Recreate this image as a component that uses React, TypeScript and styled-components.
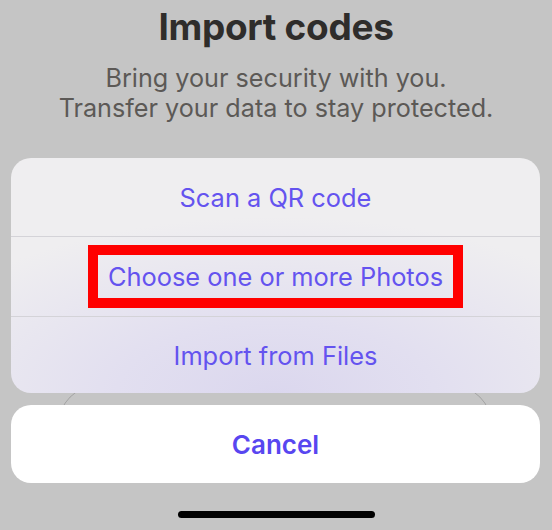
import React from 'react';
import styled, { createGlobalStyle } from 'styled-components';

const GlobalStyle = createGlobalStyle`
    html, body {
        margin: 0;
        padding: 0;
        background: #c5c5c5;
    }
    * {
        box-sizing: border-box;
    }
`;

const Screen = styled.div`
    position: relative;
    width: 552px;
    height: 530px;
    overflow: hidden;
    display: flex;
    flex-direction: column;
    background: #c5c5c5;
    font-family: Inter, 'Noto Sans', sans-serif;
`;

const Header = styled.div`
    display: flex;
    flex-direction: column;
    align-items: center;
    padding-top: 4px;
    height: 158px;
`;

const Title = styled.h1`
    margin: 0;
    font-size: 37px;
    line-height: 46px;
    font-weight: 700;
    color: #2f2d2b;
    letter-spacing: -0.3px;
`;

const Subtitle = styled.p`
    margin: 13px 0 0;
    font-size: 25.2px;
    line-height: 30px;
    font-weight: 400;
    color: #5c5956;
    text-align: center;
`;

const BehindButton = styled.div`
    position: absolute;
    left: 58px;
    right: 60px;
    top: 385px;
    height: 80px;
    border-radius: 40px;
    border: 1px solid rgba(60, 60, 60, 0.25);
`;

const Sheet = styled.div`
    position: relative;
    margin: 0 12px 0 11px;
    border-radius: 20px;
    overflow: hidden;
    background: radial-gradient(ellipse 75% 75% at 50% 100%, #dbd7ee 0%, #e2dff0 40%, #efeef0 100%);
    display: flex;
    flex-direction: column;
`;

const Row = styled.div<{ $height: number }>`
    height: ${(p) => p.$height}px;
    display: flex;
    align-items: center;
    justify-content: center;
    font-size: 25.4px;
    color: #6453ef;
    & + & {
        border-top: 1px solid #d4d3d8;
    }
`;

const Highlight = styled.span`
    display: inline-flex;
    align-items: center;
    height: 63px;
    padding: 0 10px 0 10px;
    border: 10px solid #ff0000;
`;

const CancelCard = styled.div`
    position: relative;
    margin: 12px 12px 0 11px;
    height: 78px;
    border-radius: 20px;
    background: #ffffff;
    display: flex;
    align-items: center;
    justify-content: center;
    font-size: 26px;
    font-weight: 600;
    color: #5846f0;
`;

const HomeBar = styled.div`
    align-self: center;
    margin-top: 28px;
    width: 197px;
    height: 7px;
    border-radius: 4px;
    background: #000;
`;

const App: React.FC = () => {
    return (
        <>
            <GlobalStyle />
            <Screen>
                <Header>
                    <Title>Import codes</Title>
                    <Subtitle>
                        Bring your security with you.
                        <br />
                        Transfer your data to stay protected.
                    </Subtitle>
                </Header>
                <BehindButton />
                <Sheet>
                    <Row $height={78}>Scan a QR code</Row>
                    <Row $height={80}>
                        <Highlight>Choose one or more Photos</Highlight>
                    </Row>
                    <Row $height={77}>Import from Files</Row>
                </Sheet>
                <CancelCard>Cancel</CancelCard>
                <HomeBar />
            </Screen>
        </>
    );
};

export default App;
